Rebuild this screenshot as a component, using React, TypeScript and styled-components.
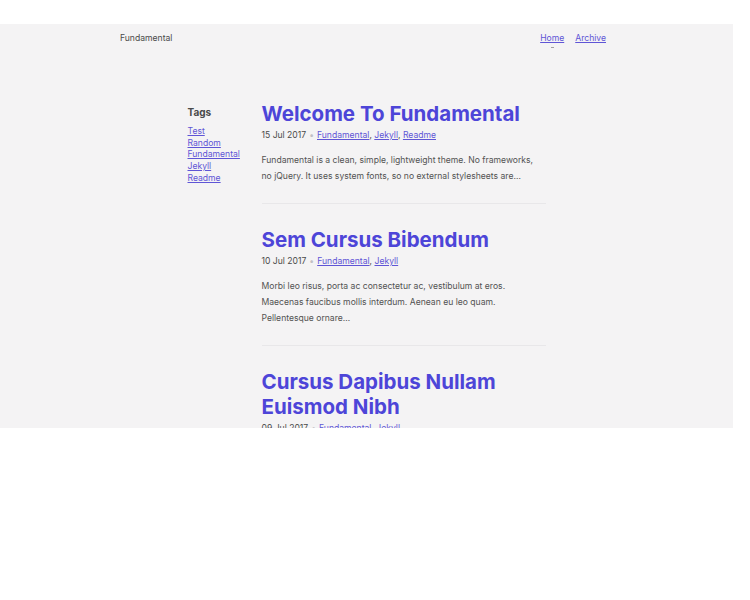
import React from "react";
import styled, { createGlobalStyle } from "styled-components";

const Global = createGlobalStyle`
  html, body { margin: 0; padding: 0; background: #ffffff; }
  body { font-family: Inter, "Noto Sans", sans-serif; }
`;

const Frame = styled.div`
  margin-top: 24px;
  width: 733px;
  height: 404px;
  overflow: hidden;
  background: #f4f3f4;
  color: #4a4a4a;
`;

const Header = styled.header`
  display: flex;
  justify-content: space-between;
  align-items: center;
  width: 486px;
  margin-left: 120px;
  height: 27px;
  font-size: 8.6px;
`;

const Brand = styled.div`
  color: #4a4a4a;
`;

const Nav = styled.nav`
  display: flex;
  gap: 11px;
`;

const NavLink = styled.a<{ $active?: boolean }>`
  position: relative;
  color: #5f55d6;
  text-decoration: underline;
  &::after {
    content: "";
    display: ${(p) => (p.$active ? "block" : "none")};
    position: absolute;
    left: 50%;
    bottom: -5px;
    width: 3px;
    height: 1px;
    margin-left: -1px;
    background: #a0a0a0;
  }
`;

const Layout = styled.div`
  display: grid;
  grid-template-columns: 74px 284px;
  width: 358px;
  margin: 50px auto 0;
`;

const Sidebar = styled.aside`
  padding-top: 4px;
`;

const SideTitle = styled.h3`
  margin: 0 0 7px;
  font-size: 10px;
  font-weight: 700;
  color: #4a4a4a;
  line-height: 14px;
`;

const TagList = styled.div`
  display: flex;
  flex-direction: column;
  align-items: flex-start;
  font-size: 8.6px;
  line-height: 11.7px;
`;

const Link = styled.a`
  color: #5f55d6;
  text-decoration: underline;
`;

const Posts = styled.main`
  display: flex;
  flex-direction: column;
`;

const Post = styled.article<{ $last?: boolean }>`
  padding-bottom: ${(p) => (p.$last ? "0" : "19px")};
  margin-bottom: ${(p) => (p.$last ? "0" : "23px")};
  border-bottom: ${(p) => (p.$last ? "none" : "1px solid #e8e7e9")};
`;

const Title = styled.h2`
  margin: 0;
  font-size: 20.5px;
  line-height: 25px;
  font-weight: 700;
  color: #4d45d8;
`;

const Meta = styled.div`
  margin-top: 2px;
  font-size: 8.6px;
  line-height: 14px;
  color: #4a4a4a;
`;

const Dot = styled.span`
  color: #c2c0c4;
  margin: 0 3px;
`;

const Excerpt = styled.p`
  margin: 10px 0 0;
  font-size: 8.6px;
  line-height: 16px;
  color: #525252;
`;

type PostData = { title: string; date: string; tags: string[]; excerpt: string };

const posts: PostData[] = [
  {
    title: "Welcome To Fundamental",
    date: "15 Jul 2017",
    tags: ["Fundamental", "Jekyll", "Readme"],
    excerpt:
      "Fundamental is a clean, simple, lightweight theme. No frameworks, no jQuery. It uses system fonts, so no external stylesheets are…",
  },
  {
    title: "Sem Cursus Bibendum",
    date: "10 Jul 2017",
    tags: ["Fundamental", "Jekyll"],
    excerpt:
      "Morbi leo risus, porta ac consectetur ac, vestibulum at eros. Maecenas faucibus mollis interdum. Aenean eu leo quam. Pellentesque ornare…",
  },
  {
    title: "Cursus Dapibus Nullam Euismod Nibh",
    date: "09 Jul 2017",
    tags: ["Fundamental", "Jekyll"],
    excerpt: "Donec id elit non mi porta gravida at eget metus.",
  },
];

export default function App() {
  return (
    <>
      <Global />
      <Frame>
        <Header>
          <Brand>Fundamental</Brand>
          <Nav>
            <NavLink $active>Home</NavLink>
            <NavLink>Archive</NavLink>
          </Nav>
        </Header>
        <Layout>
          <Sidebar>
            <SideTitle>Tags</SideTitle>
            <TagList>
              {["Test", "Random", "Fundamental", "Jekyll", "Readme"].map((t) => (
                <Link key={t}>{t}</Link>
              ))}
            </TagList>
          </Sidebar>
          <Posts>
            {posts.map((p, i) => (
              <Post key={p.title} $last={i === posts.length - 1}>
                <Title>{p.title}</Title>
                <Meta>
                  {p.date}
                  <Dot>•</Dot>
                  {p.tags.map((t, j) => (
                    <React.Fragment key={t}>
                      <Link>{t}</Link>
                      {j < p.tags.length - 1 ? ", " : ""}
                    </React.Fragment>
                  ))}
                </Meta>
                <Excerpt>{p.excerpt}</Excerpt>
              </Post>
            ))}
          </Posts>
        </Layout>
      </Frame>
    </>
  );
}
